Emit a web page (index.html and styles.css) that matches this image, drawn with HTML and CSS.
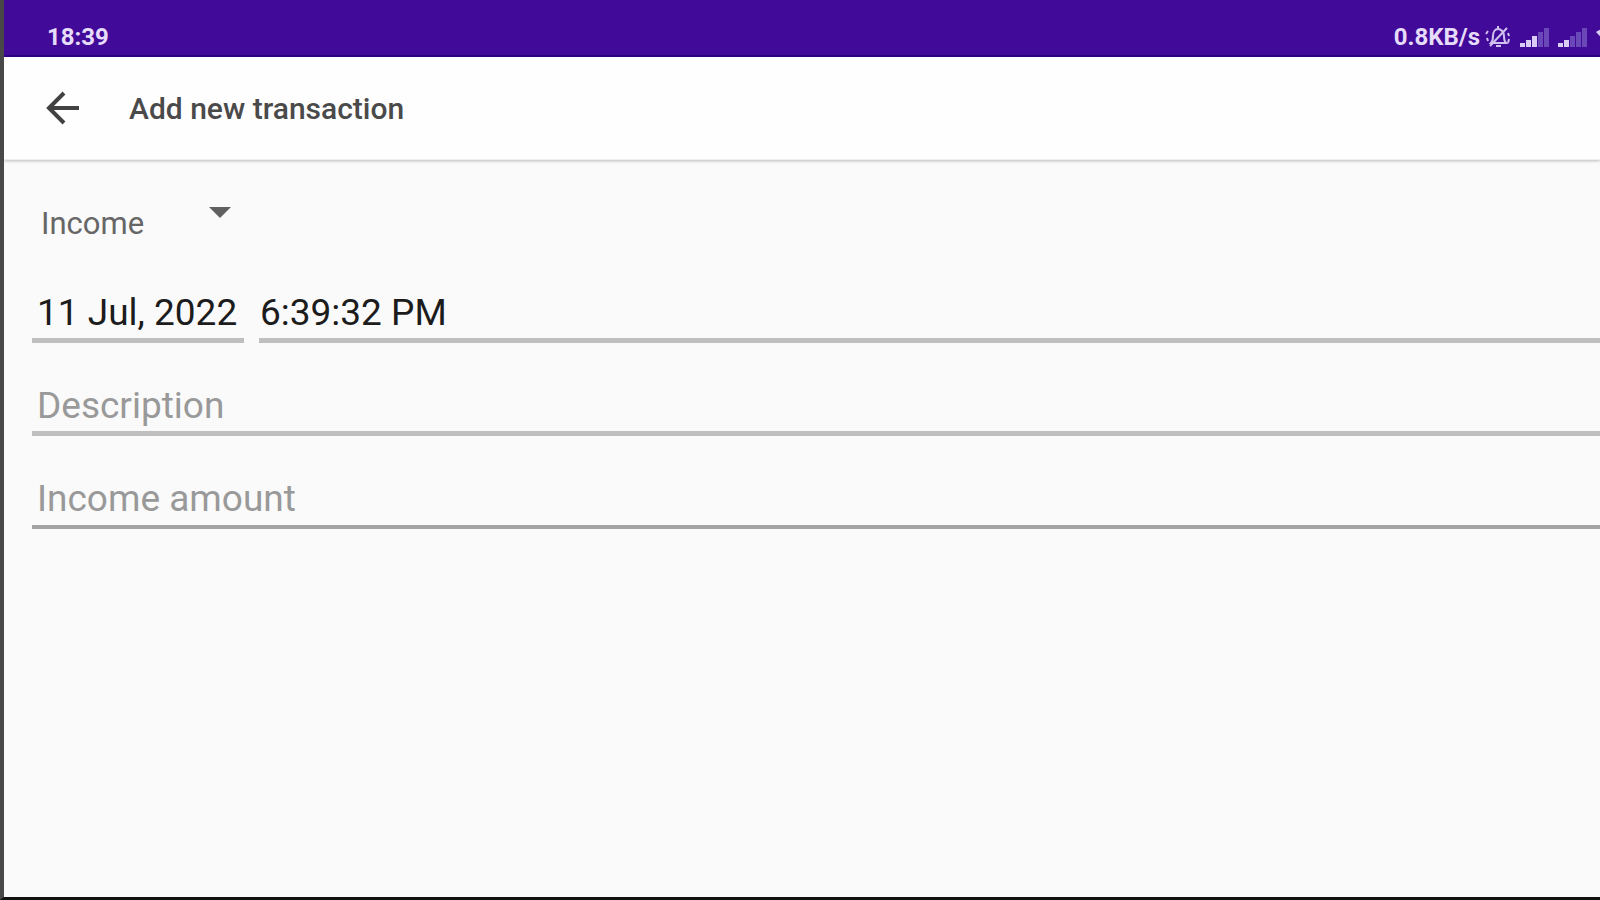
FILE: index.html
```html
<!DOCTYPE html>
<html lang="en">
<head>
    <meta charset="UTF-8">
    <meta name="viewport" content="width=device-width, initial-scale=1.0">
    <title>Add new transaction</title>
    <link rel="stylesheet" href="styles.css">
</head>
<body>
    <!-- Status bar -->
    <div class="status-bar">
        <span class="clock">18:39</span>
        <div class="status-icons">
            <span class="net-speed">0.8KB/s</span>
            <svg class="bell" viewBox="0 0 26 24" fill="none" stroke="#cfc0f0" stroke-width="2">
                <path d="M6 18c2-2 2-4 2-7 0-4 2-7 5-7s6 3 6 7c0 3 0 5 2 7z"/>
                <path d="M11 21h5M13 1v3M22 3L5 21M3 6L1 9M2 13l1 3M23 8l1 3M24 14l-1 4"/>
            </svg>
            <svg class="signal" viewBox="0 0 30 20">
                <path fill="#d9ccf5" d="M0 16h5v4H0zM6 13h5v7H6zM12 9h5v11h-5z"/>
                <path fill="#6a48b8" d="M18 5h5v15h-5zM24 1h5v19h-5z"/>
            </svg>
            <svg class="signal" viewBox="0 0 30 20">
                <path fill="#d9ccf5" d="M0 16h5v4H0zM6 13h5v7H6z"/>
                <path fill="#6a48b8" d="M12 9h5v11h-5zM18 5h5v15h-5zM24 1h5v19h-5z"/>
            </svg>
            <svg class="wifi" viewBox="0 0 28 20">
                <path fill="#d9ccf5" d="M0 5C8-1 20-1 28 5L14 20z"/>
            </svg>
        </div>
    </div>

    <!-- Toolbar -->
    <header class="toolbar">
        <button class="back-btn" type="button" aria-label="Back">
            <svg viewBox="0 0 36 36" fill="none" stroke="#424242" stroke-width="4">
                <path d="M34 18H4M19 3L4 18l15 15"/>
            </svg>
        </button>
        <h1 class="title">Add new transaction</h1>
    </header>

    <!-- Transaction form -->
    <form class="transaction-form">
        <div class="type-select">
            <select id="type" aria-label="Transaction type">
                <option>Income</option>
                <option>Expense</option>
            </select>
            <svg class="arrow" viewBox="0 0 22 11"><path fill="#616161" d="M0 0h22L11 11z"/></svg>
        </div>
        <div class="date-row">
            <input type="text" class="field date" aria-label="Date" value="11 Jul, 2022">
            <input type="text" class="field time" aria-label="Time" value="6:39:32 PM">
        </div>
        <input type="text" class="field" aria-label="Description" placeholder="Description">
        <input type="text" class="field amount" aria-label="Income amount" placeholder="Income amount">
    </form>
</body>
</html>
```
FILE: styles.css
```css
* {
    margin: 0;
    padding: 0;
    box-sizing: border-box;
    font-family: Roboto, sans-serif;
}

body {
    display: flex;
    flex-direction: column;
    min-height: 100vh;
    background-color: #fafafa;
    border-left: 4px solid #484848;
    border-bottom: 3px solid #111;
    overflow: hidden;
}

.status-bar {
    display: flex;
    justify-content: space-between;
    align-items: flex-end;
    height: 57px;
    margin-left: -4px;
    padding: 0 0 4px 43px;
    background-color: #410a98;
    border-left: 4px solid #1d0550;
    border-bottom: 2px solid #2c0485;
    color: #e6dcfa;
    overflow: hidden;
}

.clock,
.net-speed {
    font-size: 24px;
    line-height: 28px;
    font-weight: 700;
}

.status-icons {
    display: flex;
    align-items: center;
    margin-right: -24px;
}

.bell {
    width: 26px;
    height: 24px;
    margin: 0 9px 0 5px;
}

.signal {
    width: 30px;
    height: 20px;
    margin-right: 8px;
}

.wifi {
    width: 28px;
    height: 20px;
}

.toolbar {
    display: flex;
    align-items: center;
    gap: 48px;
    height: 103px;
    padding-left: 41px;
    background-color: #fefefe;
    border-bottom: 1px solid #eee;
    box-shadow: 0 1px 3px rgba(0, 0, 0, 0.25);
}

.back-btn {
    width: 36px;
    height: 36px;
    background: none;
    border: none;
    cursor: pointer;
}

.back-btn svg {
    display: block;
}

.title {
    font-size: 30px;
    font-weight: 500;
    color: #4a4a4a;
}

.transaction-form {
    display: flex;
    flex-direction: column;
    gap: 23px;
    padding: 44px 0 0 28px;
}

.type-select {
    position: relative;
    width: 212px;
}

.type-select select {
    display: block;
    width: 100%;
    height: 46px;
    padding: 0 40px 6px 9px;
    appearance: none;
    background: none;
    border: none;
    font-size: 31px;
    line-height: 40px;
    color: #666;
}

.arrow {
    position: absolute;
    top: 3px;
    right: 13px;
    width: 22px;
    height: 11px;
    pointer-events: none;
}

.date-row {
    display: flex;
    gap: 15px;
}

.field {
    width: 100%;
    height: 70px;
    padding: 15px 5px 2px;
    background: none;
    border: none;
    border-bottom: 5px solid #bfbfbf;
    outline: none;
    font-size: 37px;
    line-height: 48px;
    color: #1c1c1c;
}

.field::placeholder {
    color: #999;
}

.date {
    flex: 0 0 212px;
    padding-right: 0;
}

.time {
    flex: 1;
    padding-left: 1px;
}

.amount {
    border-bottom: 4px solid #a3a3a3;
}
```
